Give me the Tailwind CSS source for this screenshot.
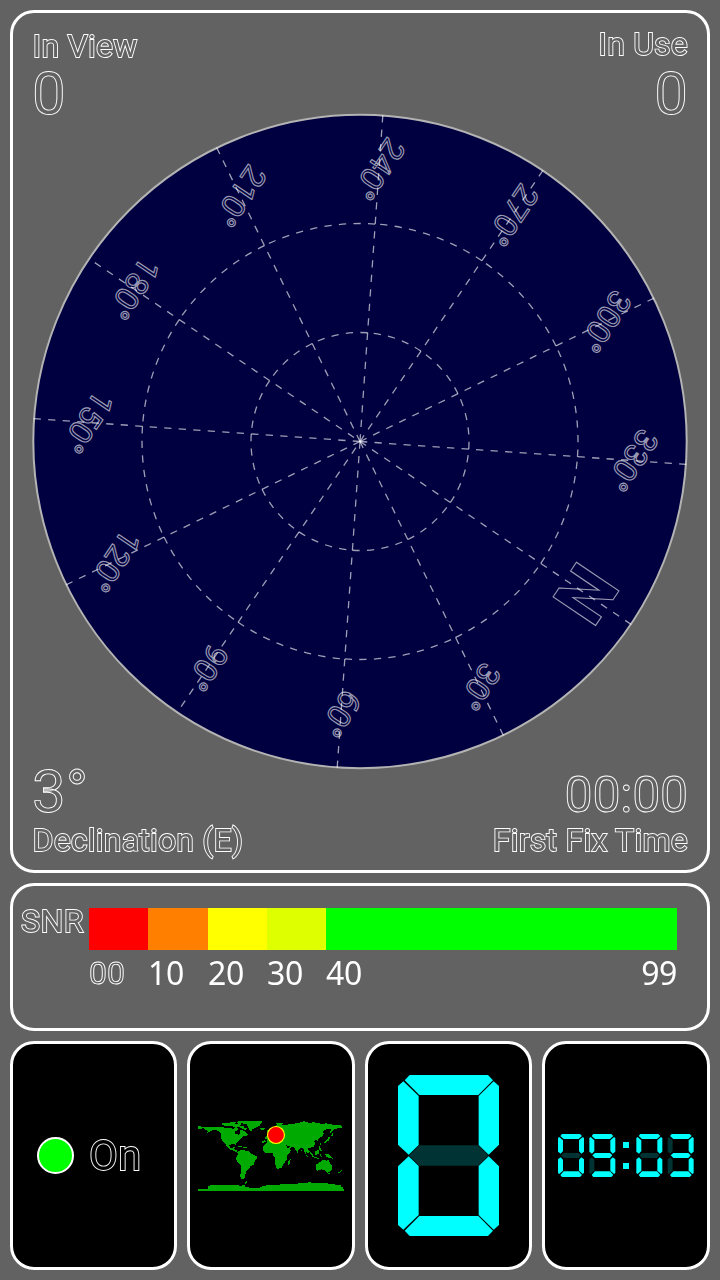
<!DOCTYPE html>
<html lang="en">
<head>
<meta charset="utf-8">
<title>GPS Status</title>
<script src="https://cdn.jsdelivr.net/npm/@tailwindcss/browser@4"></script>
</head>
<body class="w-[720px] h-[1280px] overflow-hidden bg-[#626262] font-['Roboto',sans-serif]">
<main class="flex flex-col gap-[10px] p-[10px] h-[1280px]">
  <!-- Sky view -->
  <section class="h-[863px] shrink-0 border-3 border-white rounded-[24px] flex flex-col text-[#626262]">
    <div class="h-[100px] shrink-0 flex justify-between items-start px-[19px] pt-[15px] [filter:opacity(0.99)] [paint-order:stroke_fill] [-webkit-text-stroke:1.8px_white]">
      <div class="pt-[2px]">
        <div class="text-[32px] leading-[32px] tracking-[0.2px] pl-[0.5px]">In View</div>
        <div class="text-[60px] leading-[60px] mt-[2px] text-transparent [-webkit-text-stroke:0.9px_white]">0</div>
      </div>
      <div class="text-right">
        <div class="text-[32px] leading-[32px] tracking-[0.2px]">In Use</div>
        <div class="text-[60px] leading-[60px] mt-[4px] text-transparent [-webkit-text-stroke:0.9px_white]">0</div>
      </div>
    </div>
    <svg id="sky" class="w-[660px] h-[657px] shrink-0 self-center" viewBox="-330 -328.5 660 657">
      <circle r="326.7" fill="#000040" stroke="#b3b3b3" stroke-width="2"/>
      <g id="dial" transform="rotate(124)" fill="none" stroke="#fff" stroke-opacity=".62"></g>
    </svg>
    <div class="h-[86px] shrink-0 flex justify-between items-end px-[19px] [filter:opacity(0.99)] [paint-order:stroke_fill] [-webkit-text-stroke:1.8px_white]">
      <div>
        <div class="text-[60px] leading-[60px] text-transparent [-webkit-text-stroke:0.9px_white]">3°</div>
        <div class="text-[32px] leading-[32px] mt-[2px] tracking-[0.2px] pl-[0.5px]">Declination (E)</div>
      </div>
      <div class="text-right">
        <div class="text-[50px] leading-[50px] tracking-[-0.2px] text-transparent [-webkit-text-stroke:0.9px_white]">00:00</div>
        <div class="text-[32px] leading-[32px] mt-[4px] tracking-[0.25px]">First Fix Time</div>
      </div>
    </div>
  </section>

  <!-- Signal strength legend -->
  <section class="h-[148px] shrink-0 border-3 border-white rounded-[24px] flex text-[32px] leading-[32px] text-white">
    <div class="w-[76px] shrink-0 pl-[8px] pt-[19px] tracking-[0.4px] text-[#626262] [filter:opacity(0.99)] [paint-order:stroke_fill] [-webkit-text-stroke:1.8px_white]">SNR</div>
    <div class="w-[588px] pt-[22px]">
      <div class="flex h-[42px]">
        <div class="w-[59px] bg-[#ff0000]"></div>
        <div class="w-[60px] bg-[#ff8000]"></div>
        <div class="w-[59px] bg-[#ffff00]"></div>
        <div class="w-[59px] bg-[#ddff00]"></div>
        <div class="flex-1 bg-[#00ff00]"></div>
      </div>
      <div class="flex pt-[7px] font-['Noto_Sans',sans-serif] tracking-[-0.4px] [filter:opacity(0.999)]">
        <div class="w-[59px] font-['Roboto',sans-serif] tracking-normal text-transparent [-webkit-text-stroke:0.9px_white]">00</div>
        <div class="w-[60px]">10</div>
        <div class="w-[59px]">20</div>
        <div class="w-[59px]">30</div>
        <div class="flex-1 flex justify-between"><span>40</span><span>99</span></div>
      </div>
    </div>
  </section>

  <!-- Status tiles -->
  <section class="grid grid-cols-[167px_168px_167px_168px] gap-x-[10px] h-[229px] shrink-0">
    <div class="border-3 border-white rounded-[24px] bg-black flex items-center pl-[24px] gap-[15px]">
      <div class="size-[37px] rounded-full bg-[#00ff00] border-2 border-white"></div>
      <div class="text-[42px] leading-[42px] text-black [filter:opacity(0.99)] [paint-order:stroke_fill] [-webkit-text-stroke:1.8px_white]">On</div>
    </div>
    <div class="border-3 border-white rounded-[24px] bg-black flex items-center justify-center">
      <svg class="w-[145.3px] h-[72px]" viewBox="24 30 436 216">
        <g fill="#00aa00" shape-rendering="crispEdges">
          <path d="M24 48H28L42 52L50 50L66 51L80 52L92 51L104 53L122 53L130 57L136 50L144 54V60L134 64L134 70L143 73L147 76L150 69V61L158 60L166 65L174 74L168 78L160 79L154 86L148 90L143 96L138 99V106L134 101L124 102L118 106L120 114L126 114L132 109L134 113L132 118L140 120L142 126L150 128L146 130L136 125L124 120L114 114L108 104L103 100L96 92L93 84L94 74L90 66L84 62L72 60L64 62L52 68L54 63L46 60L42 55L28 56H24Z"/>
          <path d="M92 42l14-4h14l8-3 10 1-4 6 8 1 8-4 4 2-4 6h12v5l8 3-2 6-12-6-10-5-12 1-10-4-16 2z"/>
          <path d="M140 35l16-2 14 1 14-1h30l4 3-6 4-4 8-12 5-8 4-4 6-6-3-4-8-4-9-12-3-12 1z"/>
          <path d="M211 55l7-2 7 2-3 4-8 1zM257 40l14-2 8 2-8 4zM299 46l10-4 12-3 4 2-16 7zM139 108l10-1 9 4-8 1zM159 112h11v3h-11z"/>
          <path d="M150 121l11-2 8 4 10 2 8 8 14 6v6l-6 6-3 13-10 4-5 9-8 8v6l-5 4v6l-1 5h-11l-1-9 2-14 1-16-8-7-7-10v-8l4-8v-10z"/>
          <path d="M230 94v-10l10-2 2-8-8-4-3-5v-4l5-1 2 4 8 0 4-6 8 0 4-5-8 2-4-1 8-9 12-4 10 4 8 1 8-4h18l6-4 6 1 8-4 10-1 6 3 10 1 12-1 10 3 16 1 12-1 14 3 14 2 19 2v6h-12l-5 4-8 1-6 8-5 5-2-4 6-10-12 1-8 1-6 7 2 5-4 8-12 7v8l-4-3-6-2-2 5 3 6-4 9-10 4-6 0-1 5 4 7-2 5-8-4-2 3 6 11-4-3-5-8-2-11-8-5-8 6-3 10-6-8-4-8-10-2-14-5 3 7 10-1-4 8-11 8-6-2-8-13-3-9-8-1-8-1-3-6-8-2-6 4-8-4-4-4-8 4-3 6z"/>
          <path d="M232 96l16-4 8 0 4 5 10 1 12-1 6 10 6 12 10 1-6 9-6 7v9l-5 8-6 9-5 10-9 4-7 0-4-12-1-10 1-10-6-8-2-6-10-2-10 2-8-8v-14z"/>
          <path d="M297 150l5-2-2 14-5 3-1-7zM332 118l4 3-2 4zM358 122l10 10 5 9-5-1-8-9zM376 125l8-6 5 3-3 10-8 3-4-4zM390 131h8l-6 3 4 6-5-1zM371 141l14 2 1 3-15-2zM386 109l5-1 1 8 5 6-4 3-6-7zM404 131l14 3 9 8 4 5-8-2-7 0-7-6zM404 94l8-6 5-8 4 1-4 10-8 6-6 3zM422 80l3-6 4-6 1 8zM389 100h4v5h-4z"/>
          <path d="M379 163l10-6 8-6 8-1 4 3 6-5 3 7 4 7 5 8-2 9-6 8-7 1-7-8-10-2-12 4-4-1zM414 189h6l-2 5-4-1zM445 188l10-8 1 3-10 9zM452 177l3 3 1 3zM231 88h-6v-6l5-4z"/>
          <path d="M24 243v-6h30v-8l12-4h24l14 1h24l16-2 4 3 16-1 2-10 6-4-1 7-6 4v8l14 2h30l14-6 16-2 28-1 24-3 24 1 14-2 30-3 22 3h30l16 3 16 1h14l-6 5 10 4-2 4h13v6z"/>
        </g>
        <circle cx="258" cy="75" r="25.5" fill="#f00" stroke="#ff0" stroke-width="3.5"/>
      </svg>
    </div>
    <div class="border-3 border-white rounded-[24px] bg-black flex items-center justify-center">
      <svg class="w-[101px] h-[161px]" viewBox="114 105 303 483">
        <g fill="#00ffff">
          <path d="M134 121L149 105H384L399 121L355 165H178Z"/>
          <path d="M134 572L149 588H384L399 572L355 528H178Z"/>
          <path d="M114 138L130 124L176 168V315L146 344L114 314Z"/>
          <path d="M417 138L401 124L356 168V315L386 344L417 314Z"/>
          <path d="M114 555L130 569L176 525V378L146 349L114 379Z"/>
          <path d="M417 555L401 569L356 525V378L386 349L417 379Z"/>
        </g>
        <path fill="#003333" d="M147 346.500L178 316H355L385 346.500L355 377H178Z"/>
      </svg>
    </div>
    <div class="border-3 border-white rounded-[24px] bg-black flex items-center justify-center">
      <svg id="clock" class="w-[136px] h-[43px]" viewBox="54 72 408 129"></svg>
    </div>
  </section>
</main>
<script>
// Dial: rays, range rings and bearing labels, drawn north-up and rotated as a group
const R = 327.2, dash = 'stroke-dasharray="7.27 7.27" stroke-width="1.3"';
const pt = (r, a) => [r * Math.sin(a * Math.PI / 180), -r * Math.cos(a * Math.PI / 180)];
let s = '';
for (let a = 0; a < 360; a += 30) {
  const [x, y] = pt(R, a);
  s += `<path d="M0 0L${x} ${y}" ${dash} stroke-dashoffset="${a === 90 || a === 180 ? 7.27 : 0}"/>`;
  for (const r of [109, 218]) {
    const p = pt(r, a), q = pt(r, a - 30);
    s += `<path d="M${p}A${r} ${r} 0 0 0 ${q}" ${dash}/>`;
  }
  const [lx, ly] = pt(273, a);
  s += a === 0
    ? `<text x="0" y="-247" text-anchor="middle" font-size="72" font-weight="700" stroke-width="1">N</text>`
    : `<text x="${lx}" y="${ly + 11.5}" text-anchor="middle" font-size="32" stroke-width="1.1">${a}°</text>`;
}
document.getElementById('dial').innerHTML = s;

// Seven-segment clock
const seg = {
  a: 'M7 6L12 0H66L72 6L62 15H17Z',
  b: 'M78 12L74 9L63 19V51L70 59L78 53Z',
  c: 'M78 117L74 120L63 110V77L70 70L78 76Z',
  d: 'M7 123L12 129H66L72 123L62 112H17Z',
  e: 'M0 117L4 120L15 110V77L8 70L0 76Z',
  f: 'M0 12L4 9L15 19V51L8 59L0 53Z',
  g: 'M9 64L17 57H62L69 64L62 72H17Z'
};
const lit = { 0: 'abcdef', 3: 'abcdg', 9: 'abcdfg' };
let c = '';
[[54, 0], [148, 9], [289, 0], [383, 3]].forEach(([x, n]) => {
  c += `<g transform="translate(${x} 72)">`;
  for (const k in seg) c += `<path d="${seg[k]}" fill="${lit[n].includes(k) ? '#00ffff' : '#003333'}"/>`;
  c += '</g>';
});
c += '<path fill="#00ffff" d="M249 96h18v18h-18zM249 159h18v18h-18z"/>';
document.getElementById('clock').innerHTML = c;
</script>
</body>
</html>
